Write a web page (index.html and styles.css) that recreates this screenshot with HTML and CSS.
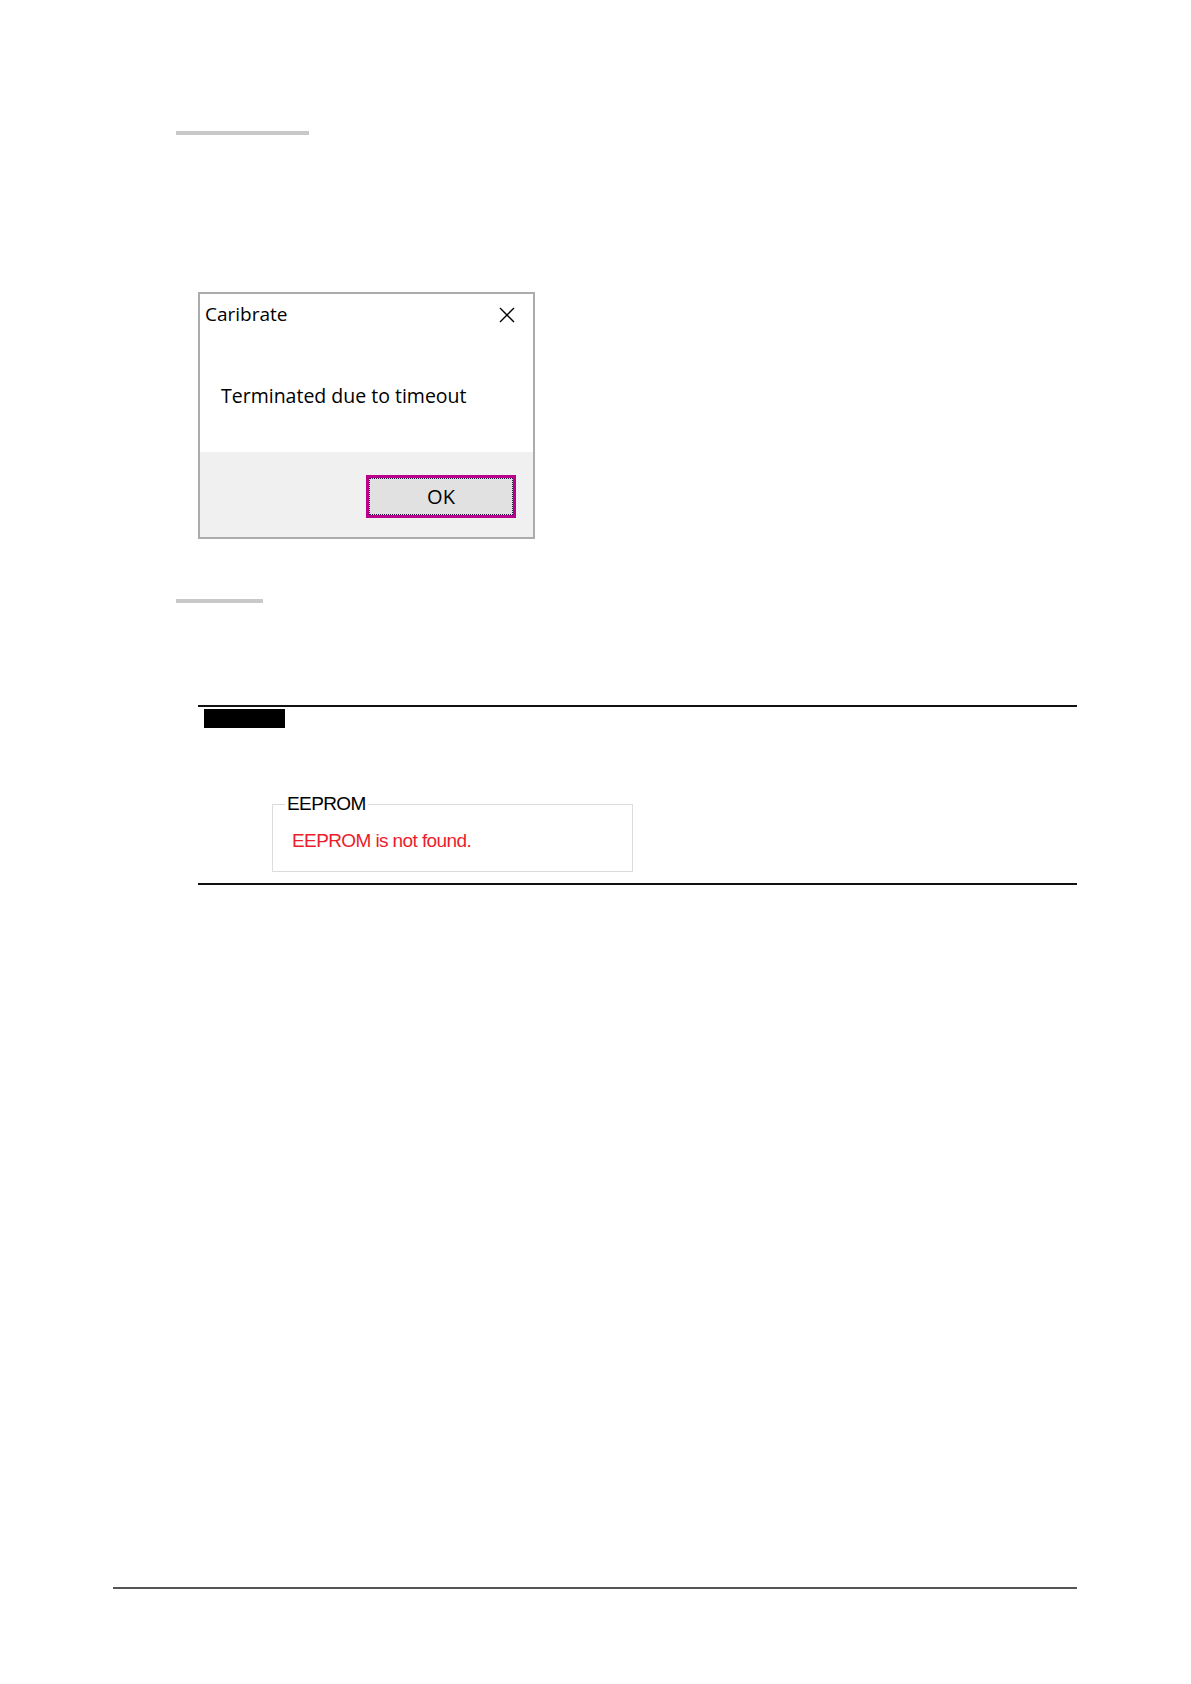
FILE: index.html
```html
<!DOCTYPE html>
<html lang="en">
<head>
<meta charset="utf-8">
<title>Caribrate</title>
<link rel="stylesheet" href="styles.css">
</head>
<body>
<div class="page">
  <div class="bar bar-long"></div>

  <div class="dialog">
    <div class="titlebar">
      <span class="title">Caribrate</span>
      <svg class="close" width="16" height="16" viewBox="0 0 16 16" aria-hidden="true">
        <path d="M1 1 L15 15 M15 1 L1 15" stroke="#000" stroke-width="1.4" fill="none"/>
      </svg>
    </div>
    <div class="dialog-body">
      <p class="message">Terminated due to timeout</p>
    </div>
    <div class="dialog-footer">
      <button class="ok">OK</button>
    </div>
  </div>

  <div class="bar bar-short"></div>

  <div class="note">
    <div class="note-tag"></div>
    <fieldset class="group">
      <legend class="group-label">EEPROM</legend>
      <p class="error">EEPROM is not found.</p>
    </fieldset>
  </div>

  <div class="footer-rule"></div>
</div>
</body>
</html>
```

FILE: styles.css
```css
html, body {
  margin: 0;
  padding: 0;
  background: #ffffff;
}

.page {
  padding-top: 131px;
  padding-bottom: 95px;
}

.bar {
  height: 4px;
  background: #c8c8c8;
  margin-left: 176px;
}

.bar-long {
  width: 133px;
}

.bar-short {
  width: 87px;
  margin-top: 60px;
}

/* Dialog */
.dialog {
  box-sizing: border-box;
  margin-top: 157px;
  margin-left: 198px;
  width: 337px;
  height: 247px;
  border: 2px solid #acacac;
  background: #ffffff;
  display: flex;
  flex-direction: column;
  font-family: "Open Sans", "Noto Sans", sans-serif;
  color: #000;
}

.titlebar {
  display: flex;
  justify-content: space-between;
  align-items: flex-start;
  padding: 7px 18px 0 5px;
}

.title {
  font-size: 19px;
  line-height: 26px;
}

.close {
  margin-top: 6px;
  display: block;
}

.dialog-body {
  flex: 1;
}

.message {
  margin: 56px 0 0 21px;
  font-size: 19.5px;
  line-height: 26px;
}

.dialog-footer {
  height: 85px;
  background: #f0f0f0;
  display: flex;
  justify-content: flex-end;
  align-items: flex-start;
  box-sizing: border-box;
  padding: 23px 17px 0 0;
}

.ok {
  box-sizing: border-box;
  width: 150px;
  height: 43px;
  border: 3px solid #b8008a;
  background: #e1e1e1;
  outline: 1px dotted #202040;
  outline-offset: -4px;
  font-family: "Open Sans", "Noto Sans", sans-serif;
  font-size: 20px;
  line-height: 26px;
  color: #000;
  padding: 0;
}

/* Note block */
.note {
  margin-top: 102px;
  margin-left: 198px;
  width: 879px;
  border-top: 2px solid #111;
  border-bottom: 2px solid #111;
  padding: 2px 0 11px 0;
  font-family: "Liberation Sans", Arial, sans-serif;
}

.note-tag {
  width: 81px;
  height: 19px;
  background: #000;
  margin-left: 6px;
}

.group {
  margin: 65px 0 0 74px;
  width: 361px;
  box-sizing: border-box;
  border: 1px solid #dcdcdc;
  padding: 0 0 19px 12px;
}

.group-label {
  padding: 0 2px;
  font-size: 19px;
  line-height: 22px;
  letter-spacing: -0.6px;
  color: #000;
}

.error {
  margin: 15px 0 0 7px;
  font-size: 19px;
  line-height: 22px;
  letter-spacing: -0.6px;
  color: #ec1c2a;
}

.footer-rule {
  margin-top: 702px;
  margin-left: 113px;
  width: 964px;
  height: 2px;
  background: #555555;
}
```
